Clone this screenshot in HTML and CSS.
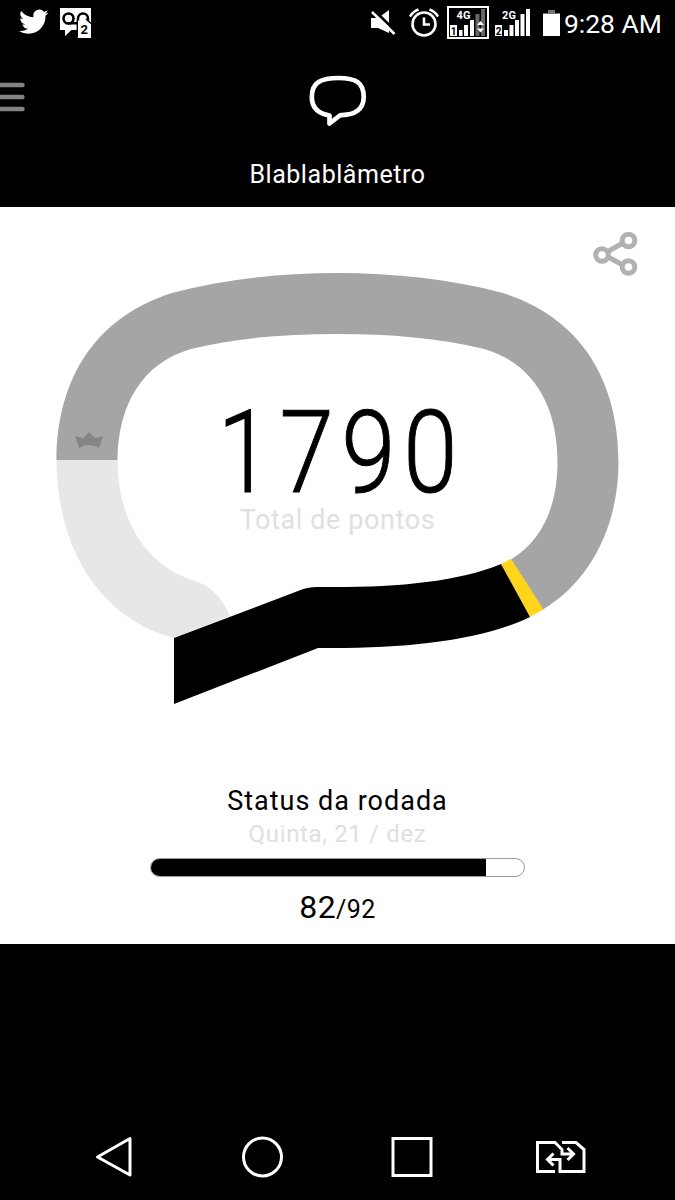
FILE: index.html
```html
<!DOCTYPE html>
<html lang="pt-BR">
<head>
    <meta charset="UTF-8">
    <meta name="viewport" content="width=device-width, initial-scale=1.0">
    <title>Blablablâmetro</title>
    <link rel="stylesheet" href="styles.css">
</head>
<body>
    <div class="status-bar">
        <div class="notifications">
            <svg class="twitter" width="30" height="26" viewBox="0 0 24 20">
                <path d="M23.6 2.4a9.600 9.600 0 0 1-2.800.8A4.800 4.800 0 0 0 23 .5a9.700 9.700 0 0 1-3.100 1.200 4.850 4.850 0 0 0-8.300 4.400A13.700 13.700 0 0 1 1.700 1.100a4.850 4.850 0 0 0 1.500 6.500 4.800 4.800 0 0 1-2.200-.6 4.850 4.850 0 0 0 3.900 4.800 4.850 4.850 0 0 1-2.200.1 4.850 4.850 0 0 0 4.500 3.400A9.700 9.700 0 0 1 0 17.200a13.700 13.700 0 0 0 7.500 2.200c9 0 14.100-7.600 13.700-14.500a9.800 9.800 0 0 0 2.400-2.500z" fill="#fff"/>
            </svg>
            <svg width="32" height="31" viewBox="0 0 32 31">
                <path d="M0 0h31v22H11.500L5 28v-6H0z" fill="#fff"/>
                <circle cx="8.500" cy="10.500" r="5" fill="none" stroke="#000" stroke-width="2.600"/>
                <path d="M8 15.300h10M18 15v-4.500a5 5 0 0 1 10 0v3" fill="none" stroke="#000" stroke-width="2.400"/>
                <path d="M17.500 12.500h9.500l4 4v13.500H17.500z" fill="#fff"/>
                <path d="M17.300 29.500v-17M26 11l5 4.500" fill="none" stroke="#000" stroke-width="1.400"/>
                <text x="24.300" y="26" class="sim-badge">2</text>
            </svg>
        </div>
        <div class="indicators">
            <svg width="27" height="27" viewBox="0 0 27 27">
                <path d="M1 8h7l11-8v23L8 18H1z" fill="#fff"/>
                <path d="M4 0l22 22" stroke="#000" stroke-width="3"/>
                <path d="M2 2l22.500 22" stroke="#fff" stroke-width="2.600"/>
            </svg>
            <svg class="alarm" width="30" height="29" viewBox="0 0 30 29">
                <g fill="none" stroke="#fff" stroke-width="2.600">
                    <circle cx="15" cy="16" r="11.500"/>
                    <path d="M15 9.500v7h6M1 8.500q3-5 8.500-7M29 8.500q-3-5-8.500-7"/>
                </g>
            </svg>
            <svg class="signal-one" width="42" height="34" viewBox="0 0 42 34">
                <rect x="1" y="1" width="40" height="31" fill="none" stroke="#fff" stroke-width="2"/>
                <path d="M3 19h7v11H3zM12 24h3.500v6H12zM17 19h4v11h-4zM23 14h4v16h-4z" fill="#fff"/>
                <path d="M28.500 8h4v22h-4zM34 3h4v27h-4z" fill="#666"/>
                <path d="M30 19l3.500-4 3.500 4zM30 22.500h7l-3.500 4z" fill="#fff"/>
                <text x="16.500" y="12.500" class="network">4G</text>
                <text x="6.500" y="28.500" class="slot">1</text>
            </svg>
            <svg class="signal-two" width="37" height="34" viewBox="0 0 37 34">
                <path d="M0 19h7v11H0zM9 24h4v6H9zM14.500 19h4v11h-4zM20 14h4v16h-4zM25.500 8h4v22h-4zM31 3h4v27h-4z" fill="#fff"/>
                <text x="14" y="12.500" class="network">2G</text>
                <text x="3.500" y="28.500" class="slot">2</text>
            </svg>
            <svg class="battery" width="17" height="26" viewBox="0 0 17 26">
                <path d="M5 0h7v3h5v3H0V3h5z" fill="#777"/>
                <path d="M0 4h17v22H0z" fill="#fff"/>
            </svg>
            <span class="clock">9:28 AM</span>
        </div>
    </div>

    <header class="header">
        <svg class="menu" width="25" height="30" viewBox="0 0 25 30">
            <path d="M-4 3h26.500M-4 15h26.500M-4 27h26.500" stroke="#828282" stroke-width="4.400" stroke-linecap="round"/>
        </svg>
        <svg class="logo" width="58" height="52" viewBox="0 0 58 52">
            <path d="M20.500 40.500C8.500 38.500 2.800 32 2.800 22 2.800 7.500 12 3 29.500 3S54.700 7.500 54.700 22C54.700 34 46 40.500 31.500 40L20.500 48.500z" fill="none" stroke="#fff" stroke-width="4.700" stroke-linejoin="round"/>
        </svg>
        <h1 class="title">Blablablâmetro</h1>
    </header>

    <main class="content">
        <svg class="share" width="46" height="46" viewBox="0 0 46 46">
            <g fill="none" stroke="#b1b1b1" stroke-width="5">
                <path d="M15 20.500l15-8.500M15 26l15 8"/>
                <circle cx="9" cy="24" r="6.300"/>
                <circle cx="35.500" cy="9.500" r="6.300"/>
                <circle cx="35.500" cy="36" r="6.300"/>
            </g>
        </svg>

        <div class="gauge">
            <svg width="565" height="434" viewBox="55 271 565 434">
                <path d="M56.500 460C57 378 96 317 172 293C225 279 280 273 337 273S450 279 503 293C579 317 618.500 378 618.500 462C618.500 524 592 580 543 609.500L511 559.500C543 540 557.500 505 557.500 462C557.500 405 533 363 484 349C440 338 390 334 337 334S236 338 191 349C142 363 118 405 117.500 460z" fill="#a5a5a5"/>
                <path d="M56.500 460H117.500C118 520 145 564 192 580C210 585 222 597 230 616L174 638C105 620 57 555 56.500 460z" fill="#e7e7e7"/>
                <path d="M501 564L511 559L543.500 609.500L530 617z" fill="#ffd51c"/>
                <path d="M174 638L298 591Q307 587 317 587C390 588 455 583 501 564L530 617C480 641 405 649 318 648L174 704z" fill="#000"/>
                <path d="M75 436l8 2 6-6 6 6 8-2-4 12q-10-6-20 0z" fill="#858585"/>
            </svg>
            <div class="score">
                <div class="points">1790</div>
                <div class="points-label">Total de pontos</div>
            </div>
        </div>

        <section class="round">
            <h2 class="round-title">Status da rodada</h2>
            <p class="round-date">Quinta, 21 / dez</p>
            <div class="progress"><div class="progress-fill" style="width: 89.800%"></div></div>
            <p class="round-count">82<span class="total">/92</span></p>
        </section>
    </main>

    <nav class="nav-bar">
        <svg width="520" height="80" viewBox="80 1120 520 80">
            <g fill="none" stroke="#fff" stroke-width="3">
                <path d="M97.500 1157L130 1138.500V1175z" stroke-linejoin="round"/>
                <circle cx="262.500" cy="1157" r="19"/>
                <path d="M393 1138.500h38v37h-38z"/>
                <path d="M555 1171.500h-17.500v-29H555l7 7v4.500h11M567.500 1148l6 6-6 6M562 1142.500h14l8 7v22h-24v-12h-12M553.500 1153.500l-6 6 6 6"/>
            </g>
        </svg>
    </nav>
</body>
</html>
```
FILE: styles.css
```css
body {
    margin: 0;
    background-color: #000;
    color: #000;
    font-family: Roboto, "Liberation Sans", sans-serif;
}

h1, h2, p {
    margin: 0;
    font-weight: 400;
}

svg {
    display: block;
    flex-shrink: 0;
}

.status-bar {
    display: flex;
    justify-content: space-between;
    height: 46px;
    padding: 0 13px 0 19px;
    box-sizing: border-box;
}

.notifications {
    display: flex;
    gap: 11px;
    padding-top: 8px;
}

.twitter {
    margin-top: 1px;
}

.indicators {
    display: flex;
    align-items: flex-start;
    padding-top: 6px;
    color: #fff;
}

.indicators > svg:first-child {
    margin: 4px 12px 0 0;
}

.alarm {
    margin: 2px 8px 0 0;
}

.signal-one {
    margin-right: 6px;
}

.signal-two {
    margin-right: 11px;
}

.battery {
    margin: 4px 4px 0 0;
}

.clock {
    font-size: 26.500px;
    line-height: 36px;
    white-space: nowrap;
}

.sim-badge,
.network,
.slot {
    font-family: Roboto, sans-serif;
    font-weight: 700;
    text-anchor: middle;
}

.sim-badge {
    font-size: 13px;
}

.network {
    font-size: 11px;
    fill: #fff;
}

.slot {
    font-size: 10px;
}

.header {
    position: relative;
    display: flex;
    flex-direction: column;
    align-items: center;
    height: 161px;
    padding-top: 29px;
    box-sizing: border-box;
    color: #fff;
}

.menu {
    position: absolute;
    left: 0;
    top: 36px;
}

.title {
    margin-top: 31px;
    font-size: 25px;
    line-height: 33px;
    letter-spacing: 0.550px;
}

.content {
    display: flex;
    flex-direction: column;
    align-items: center;
    height: 737px;
    padding-top: 24px;
    box-sizing: border-box;
    background-color: #fff;
}

.share {
    align-self: flex-end;
    margin-right: 36px;
}

.gauge {
    position: relative;
    margin-top: -6px;
}

/* sits inside the balloon */
.score {
    position: absolute;
    top: 136px;
    left: 0;
    width: 100%;
    text-align: center;
}

.points {
    padding-left: 9px;
    font-size: 115px;
    font-weight: 300;
    line-height: 92px;
    letter-spacing: 9px;
    transform: scaleX(0.850);
    -webkit-text-stroke: 1px #000;
}

.points-label {
    margin-top: 5px;
    font-size: 27px;
    line-height: 32px;
    letter-spacing: 0.600px;
    color: #e0e0e0;
}

.round {
    display: flex;
    flex-direction: column;
    align-items: center;
    margin-top: 79px;
}

.round-title {
    font-size: 27px;
    line-height: 34px;
    letter-spacing: 1px;
}

.round-date {
    font-size: 24px;
    line-height: 32px;
    letter-spacing: 0.650px;
    color: #e0e0e0;
}

.progress {
    width: 375px;
    height: 19px;
    margin-top: 8px;
    box-sizing: border-box;
    overflow: hidden;
    border: 1px solid #999;
    border-radius: 10px;
}

.progress-fill {
    height: 100%;
    background-color: #000;
}

.round-count {
    margin-top: 10px;
    font-size: 32px;
    line-height: 40px;
    letter-spacing: 0.400px;
}

.total {
    font-size: 25px;
}

.nav-bar {
    height: 256px;
    padding: 176px 0 0 80px;
    box-sizing: border-box;
}
```
